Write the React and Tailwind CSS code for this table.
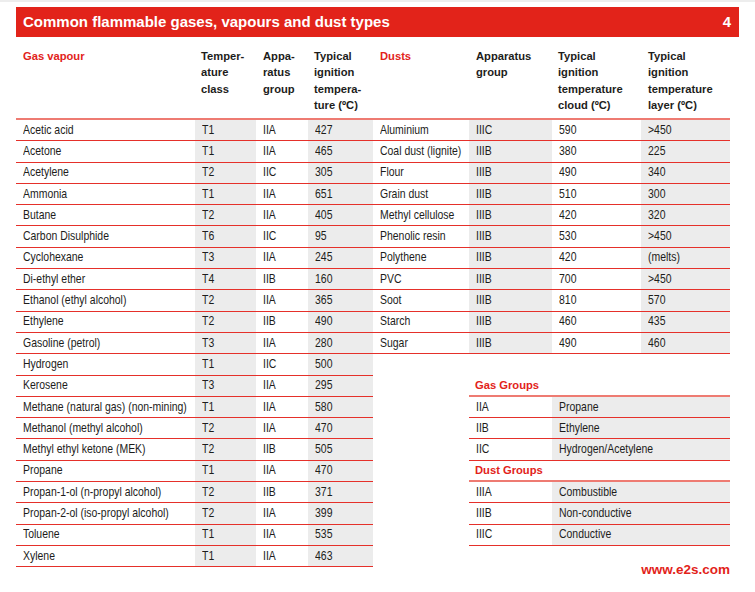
import React from "react";

const gases = [
  ["Acetic acid", "T1", "IIA", "427"],
  ["Acetone", "T1", "IIA", "465"],
  ["Acetylene", "T2", "IIC", "305"],
  ["Ammonia", "T1", "IIA", "651"],
  ["Butane", "T2", "IIA", "405"],
  ["Carbon Disulphide", "T6", "IIC", "95"],
  ["Cyclohexane", "T3", "IIA", "245"],
  ["Di-ethyl ether", "T4", "IIB", "160"],
  ["Ethanol (ethyl alcohol)", "T2", "IIA", "365"],
  ["Ethylene", "T2", "IIB", "490"],
  ["Gasoline (petrol)", "T3", "IIA", "280"],
  ["Hydrogen", "T1", "IIC", "500"],
  ["Kerosene", "T3", "IIA", "295"],
  ["Methane (natural gas) (non-mining)", "T1", "IIA", "580"],
  ["Methanol (methyl alcohol)", "T2", "IIA", "470"],
  ["Methyl ethyl ketone (MEK)", "T2", "IIB", "505"],
  ["Propane", "T1", "IIA", "470"],
  ["Propan-1-ol (n-propyl alcohol)", "T2", "IIB", "371"],
  ["Propan-2-ol (iso-propyl alcohol)", "T2", "IIA", "399"],
  ["Toluene", "T1", "IIA", "535"],
  ["Xylene", "T1", "IIA", "463"],
];

const dusts = [
  ["Aluminium", "IIIC", "590", ">450"],
  ["Coal dust (lignite)", "IIIB", "380", "225"],
  ["Flour", "IIIB", "490", "340"],
  ["Grain dust", "IIIB", "510", "300"],
  ["Methyl cellulose", "IIIB", "420", "320"],
  ["Phenolic resin", "IIIB", "530", ">450"],
  ["Polythene", "IIIB", "420", "(melts)"],
  ["PVC", "IIIB", "700", ">450"],
  ["Soot", "IIIB", "810", "570"],
  ["Starch", "IIIB", "460", "435"],
  ["Sugar", "IIIB", "490", "460"],
];

const gasGroups = [
  ["IIA", "Propane"],
  ["IIB", "Ethylene"],
  ["IIC", "Hydrogen/Acetylene"],
];

const dustGroups = [
  ["IIIA", "Combustible"],
  ["IIIB", "Non-conductive"],
  ["IIIC", "Conductive"],
];

// body copy in the print is a narrow face; squeeze Liberation Sans to match
const body = "text-[12.6px] text-[#1d1d1b]";
const head = "font-bold text-[11.2px] leading-[16.3px]";
const row = "h-[21.3px] border-b border-[#e5302a] grid items-center";

function Cell({ children, gray }) {
  return (
    <div className={`h-full flex items-center pl-[7px] overflow-visible ${gray ? "bg-[#ececec]" : ""}`}>
      <span className="inline-block whitespace-nowrap origin-left scale-x-[0.83]">{children}</span>
    </div>
  );
}

function GroupTable({ title, rows }) {
  return (
    <div className="ml-[96px]">
      <div className={`h-[21.3px] border-b-2 border-[#ee7b72] flex items-center pl-[6px] text-[#e2231a] ${head}`}>
        {title}
      </div>
      {rows.map((r) => (
        <div key={r[0]} className={`${row} grid-cols-[83px_178px] ${body}`}>
          <Cell>{r[0]}</Cell>
          <Cell gray>{r[1]}</Cell>
        </div>
      ))}
    </div>
  );
}

export default function App() {
  return (
    <div className="w-[755px] h-[592px] bg-white font-['Liberation_Sans',Arial,sans-serif]">
      <div className="h-[2px] bg-[#ededed]" />
      <div className="mx-[16px] mt-[5px]">
        {/* red title bar */}
        <div className="h-[30px] bg-[#e2231a] flex items-center justify-between pl-[7px] pr-[8px] text-white font-bold text-[15px]">
          <span>Common flammable gases, vapours and dust types</span>
          <span>4</span>
        </div>

        <div className="flex">
          {/* gases */}
          <div className="w-[357px]">
            <div className={`h-[83px] border-b-2 border-[#ee7b72] grid grid-cols-[179px_61px_52px_65px] items-start pt-[11px] ${head} text-[#1d1d1b]`}>
              <div className="pl-[7px] text-[#e2231a]">Gas vapour</div>
              <div className="pl-[6px]">Temper-<br />ature<br />class</div>
              <div className="pl-[7px]">Appa-<br />ratus<br />group</div>
              <div className="pl-[6px]">Typical<br />ignition<br />tempera-<br />ture (ºC)</div>
            </div>
            {gases.map((g) => (
              <div key={g[0]} className={`${row} grid-cols-[179px_61px_52px_65px] ${body}`}>
                <Cell>{g[0]}</Cell>
                <Cell gray>{g[1]}</Cell>
                <Cell>{g[2]}</Cell>
                <Cell gray>{g[3]}</Cell>
              </div>
            ))}
          </div>

          {/* dusts + groups */}
          <div className="w-[357px]">
            <div className={`h-[83px] border-b-2 border-[#ee7b72] grid grid-cols-[96px_83px_89px_89px] items-start pt-[11px] ${head} text-[#1d1d1b]`}>
              <div className="pl-[7px] text-[#e2231a]">Dusts</div>
              <div className="pl-[7px]">Apparatus<br />group</div>
              <div className="pl-[6px]">Typical<br />ignition<br />temperature<br />cloud (ºC)</div>
              <div className="pl-[7px]">Typical<br />ignition<br />temperature<br />layer (ºC)</div>
            </div>
            {dusts.map((d) => (
              <div key={d[0]} className={`${row} grid-cols-[96px_83px_89px_89px] ${body}`}>
                <Cell>{d[0]}</Cell>
                <Cell gray>{d[1]}</Cell>
                <Cell>{d[2]}</Cell>
                <Cell gray>{d[3]}</Cell>
              </div>
            ))}

            <div className="mt-[21.3px]">
              <GroupTable title="Gas Groups" rows={gasGroups} />
              <GroupTable title="Dust Groups" rows={dustGroups} />
            </div>

            <div className="mt-[14px] text-right text-[#e2231a] font-bold text-[13.5px]">www.e2s.com</div>
          </div>
        </div>
      </div>
    </div>
  );
}
